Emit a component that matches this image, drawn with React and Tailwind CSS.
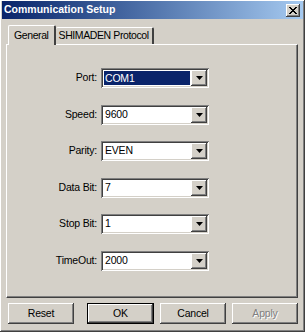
import React from "react";

const raised =
  "shadow-[inset_-1px_-1px_0_#404040,inset_1px_1px_0_#ffffff,inset_-2px_-2px_0_#808080,inset_2px_2px_0_#d4d0c8]";
const sunken =
  "shadow-[inset_1px_1px_0_#808080,inset_-1px_-1px_0_#ffffff,inset_2px_2px_0_#404040,inset_-2px_-2px_0_#d4d0c8]";

const fields = [
  { label: "Port:", value: "COM1", selected: true },
  { label: "Speed:", value: "9600" },
  { label: "Parity:", value: "EVEN" },
  { label: "Data Bit:", value: "7" },
  { label: "Stop Bit:", value: "1" },
  { label: "TimeOut:", value: "2000" },
];

const Combo = ({ value, selected }) => (
  <div className={`relative w-[108px] h-[20px] bg-white ${sunken} flex items-center p-[2px]`}>
    <div className="flex-1 h-full flex items-center pl-[1px] pr-[1px]">
      <span
        className={
          selected
            ? "bg-[#0a246a] text-white w-full h-[14px] leading-[14px] pl-[1px]"
            : "text-black pl-[1px]"
        }
      >
        {value}
      </span>
    </div>
    <div className={`w-[16px] h-full bg-[#d4d0c8] ${raised} flex items-center justify-center`}>
      <svg width="7" height="4" viewBox="0 0 7 4">
        <path d="M0 0h7L3.5 4z" fill="#000" />
      </svg>
    </div>
  </div>
);

const Button = ({ children, isDefault, disabled, className = "" }) => (
  <div
    className={`h-[21px] flex items-center justify-center bg-[#d4d0c8] ${
      isDefault ? "border border-black" : ""
    } ${className}`}
  >
    <div className={`w-full h-full flex items-center justify-center ${raised}`}>
      <span
        className={
          disabled ? "text-[#808080] [text-shadow:1px_1px_0_#ffffff]" : "text-black"
        }
      >
        {children}
      </span>
    </div>
  </div>
);

export default function App() {
  return (
    <div
      className={`w-[305px] h-[332px] bg-[#d4d0c8] ${raised} flex flex-col text-[10.5px] tracking-[-0.2px] text-black`}
      style={{ fontFamily: '"Liberation Sans", Arial, sans-serif' }}
    >
      <div className="mx-[2px] mt-[1px] h-[18px] bg-gradient-to-r from-[#0a246a] to-[#a6caf0] flex items-center justify-between pl-[2px] pr-[3px]">
        <span className="text-white font-bold text-[10.5px] tracking-normal">Communication Setup</span>
        <div className={`w-[14px] h-[13px] bg-[#d4d0c8] ${raised} flex items-center justify-center`}>
          <svg width="8" height="7" viewBox="0 0 8 7">
            <path d="M0 0L7 7M1 0L8 7M7 0L0 7M8 0L1 7" stroke="#000" strokeWidth="1" />
          </svg>
        </div>
      </div>

      <div className="flex items-end pl-[8px] mt-[5px] h-[20px] tracking-[-0.4px]">
        <div className="relative z-10 h-[20px] px-[5px] bg-[#d4d0c8] border-t border-l border-white border-r-2 border-r-[#404040] rounded-t-[2px] flex items-center -mb-[1px]">
          General
        </div>
        <div className="h-[17px] px-[3px] bg-[#d4d0c8] border-t border-white border-r-2 border-r-[#404040] rounded-t-[2px] flex items-center">
          SHIMADEN Protocol
        </div>
      </div>

      <div className="ml-[6px] mr-[7px] h-[254px] border-t border-l border-white border-r border-b border-r-[#404040] border-b-[#404040] shadow-[inset_-1px_-1px_0_#808080] flex flex-col gap-[16.5px] pt-[23px] pl-[15px]">
        {fields.map((f) => (
          <div key={f.label} className="flex items-center">
            <div className="w-[79px] text-right pr-[4px]">{f.label}</div>
            <Combo value={f.value} selected={f.selected} />
          </div>
        ))}
      </div>

      <div className="flex mt-[5px] pl-[8px]">
        <Button className="w-[66px]">Reset</Button>
        <Button isDefault className="w-[67px] ml-[13px]">OK</Button>
        <Button className="w-[66px] ml-[6px]">Cancel</Button>
        <Button disabled className="w-[66px] ml-[6px]">Apply</Button>
      </div>
    </div>
  );
}
